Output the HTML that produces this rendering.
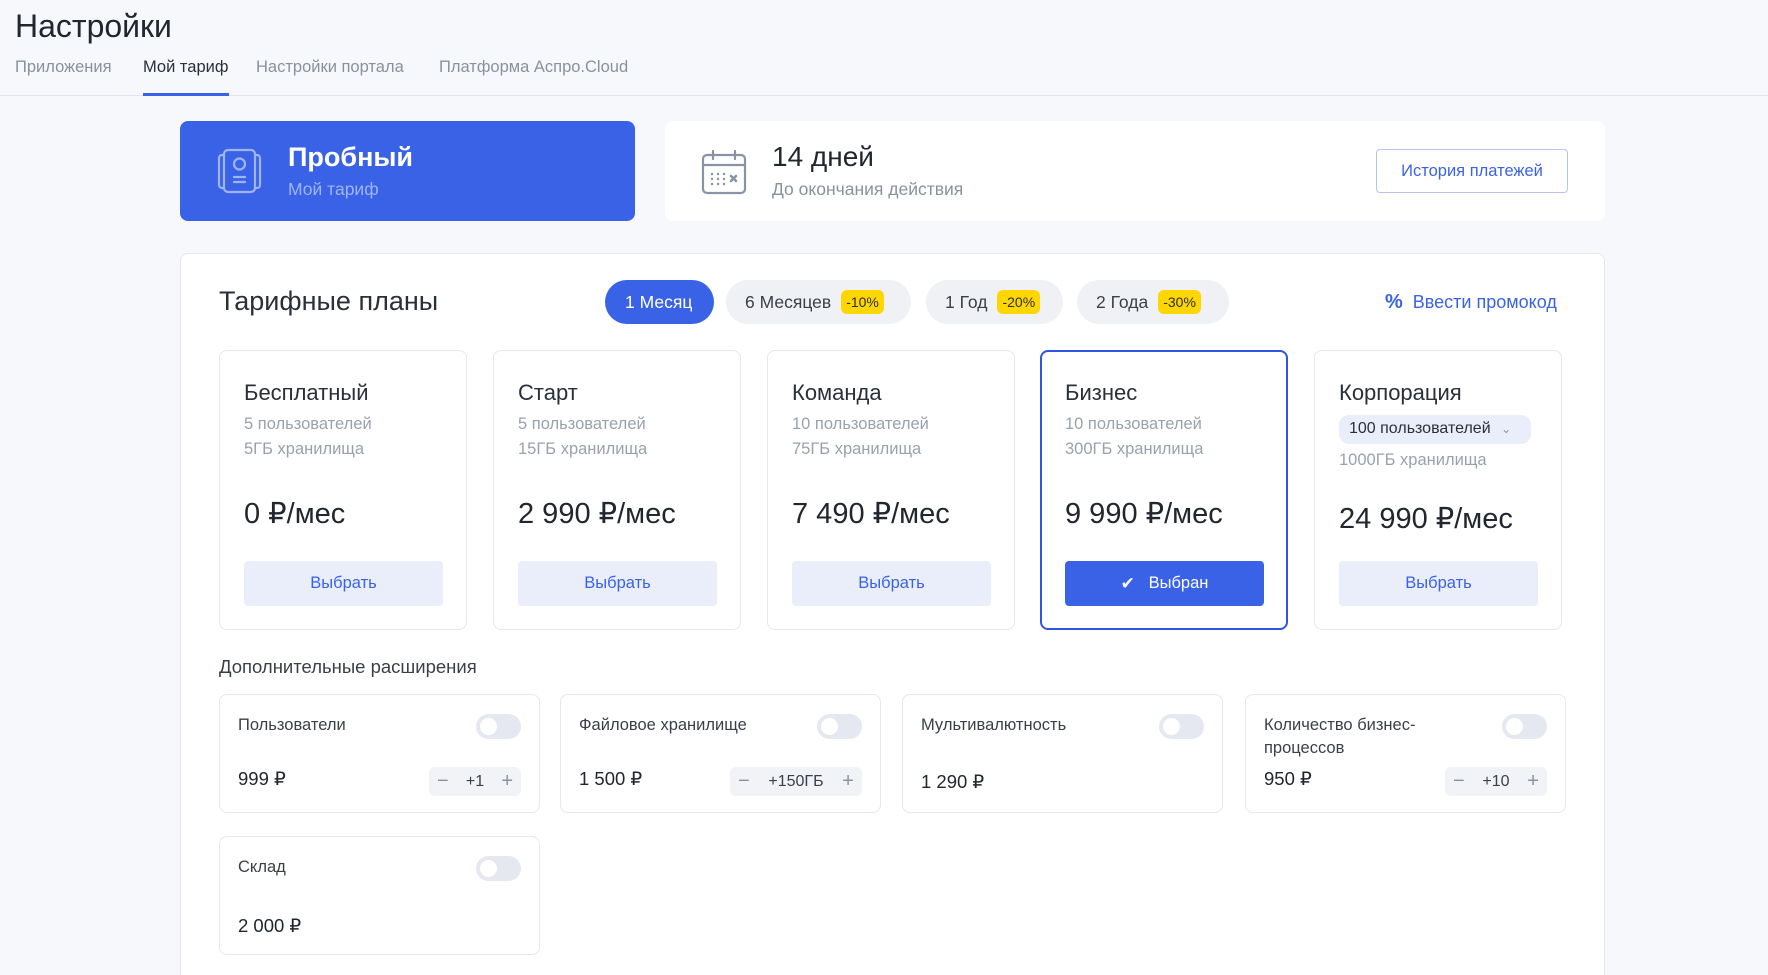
<!DOCTYPE html>
<html><head><meta charset="utf-8"><style>
*{box-sizing:border-box;margin:0;padding:0}
html,body{width:1768px;height:975px;overflow:hidden}
body{background:#f7f8fc;font-family:"Liberation Sans",sans-serif;color:#2b2f38;position:relative}
.a{position:absolute;white-space:nowrap}
.tab{top:58px;font-size:16.5px;color:#8a919c}
.card{position:absolute;background:#fff;border-radius:8px}
.plan{position:absolute;top:350px;width:248px;height:280px;border:1px solid #e6e8f0;border-radius:8px;background:#fff}
.plan .t{position:absolute;left:24px;top:29px;font-size:22px;color:#2b2f38}
.plan .s{position:absolute;left:24px;font-size:16.5px;color:#9aa1ad}
.plan .p{position:absolute;left:24px;top:145px;font-size:29px;color:#22262e}
.plan .b{position:absolute;left:24px;top:210px;width:199px;height:45px;border-radius:4px;background:#eaeefb;color:#3a62e6;font-size:16.5px;display:flex;align-items:center;justify-content:center}
.pill{position:absolute;top:280px;height:44px;border-radius:22px;background:#f0f1f5;font-size:17.5px;color:#3a3f48;display:flex;align-items:center;padding-left:19px}
.bd{background:#ffd600;color:#2b2f38;font-size:14px;border-radius:6px;padding:4px 5px;margin-left:10px}
.ad{position:absolute;width:321px;height:119px;border:1px solid #e6e8f0;border-radius:8px;background:#fff}
.ad .l{position:absolute;left:18px;top:19px;font-size:16.5px;color:#3a3f48;line-height:23px}
.ad .tg{position:absolute;left:256px;top:19px;width:45px;height:25px;border-radius:13px;background:#e5e8f1}
.ad .tg:after{content:"";position:absolute;left:4px;top:4px;width:17px;height:17px;border-radius:50%;background:#fff}
.ad .pr{position:absolute;left:18px;top:73px;font-size:18.5px;color:#22262e}
.ad .st{position:absolute;right:18px;top:72px;height:29px;border-radius:6px;background:#f1f3f7;font-size:16px;color:#3a3f48;display:flex;align-items:center;justify-content:space-between;padding:0 8px}
.ad .st i{font-style:normal;color:#8a93a3;font-size:20px}
</style></head><body>
<div class="a" style="left:15px;top:8px;font-size:32px;color:#22262e">Настройки</div>
<div class="a tab" style="left:15px">Приложения</div>
<div class="a tab" style="left:143px;color:#2b2f38">Мой тариф</div>
<div class="a tab" style="left:256px">Настройки портала</div>
<div class="a tab" style="left:439px">Платформа Аспро.Cloud</div>
<div class="a" style="left:0;top:95px;width:1768px;height:1px;background:#e3e6ee"></div>
<div class="a" style="left:143px;top:93px;width:86px;height:3px;background:#3a62e6"></div>

<div class="card" style="left:180px;top:121px;width:455px;height:100px;background:#3a62e6"></div>
<svg class="a" style="left:216px;top:146px" width="48" height="50" viewBox="0 0 48 50" fill="none" stroke="#9fb4f2" stroke-width="2.2" stroke-linecap="round"><rect x="8" y="4" width="31" height="42" rx="4"/><path d="M8 9H6a3 3 0 0 0-3 3v27a3 3 0 0 0 3 3h2M39 9h2a3 3 0 0 1 3 3v27a3 3 0 0 1-3 3h-2"/><circle cx="23.5" cy="18" r="5.5"/><path d="M18 31h11M18 36h11"/></svg>
<div class="a" style="left:288px;top:142px;font-size:27px;color:#fff;font-weight:bold">Пробный</div>
<div class="a" style="left:288px;top:179px;font-size:17.5px;color:#9fb4f2">Мой тариф</div>

<div class="card" style="left:665px;top:121px;width:940px;height:100px"></div>
<svg class="a" style="left:700px;top:148px" width="48" height="48" viewBox="0 0 48 48" fill="none" stroke="#8893a6" stroke-width="2.2" stroke-linecap="round"><rect x="3" y="7" width="42" height="38" rx="4"/><path d="M3 17h42M13 3v8M35 3v8"/><g stroke-width="2.4"><path d="M12 26h.1M18 26h.1M24 26h.1M12 31h.1M18 31h.1M24 31h.1M12 36h.1M18 36h.1M24 36h.1"/></g><path d="M31 28l5 5M36 28l-5 5" stroke-width="2.6"/></svg>
<div class="a" style="left:772px;top:141px;font-size:28px;color:#22262e">14 дней</div>
<div class="a" style="left:772px;top:179px;font-size:17.5px;color:#8a919c">До окончания действия</div>
<div class="a" style="left:1376px;top:149px;width:192px;height:44px;border:1px solid #b7c4ef;border-radius:4px;background:#fff;color:#3a62e6;font-size:16.5px;display:flex;align-items:center;justify-content:center">История платежей</div>

<div class="card" style="left:180px;top:253px;width:1425px;height:722px;border:1px solid #e6e8f0;border-bottom:none;border-radius:8px 8px 0 0"></div>
<div class="a" style="left:219px;top:286px;font-size:27px;color:#2b2f38">Тарифные планы</div>
<div class="pill" style="left:605px;width:109px;background:#3a62e6;color:#fff;padding-left:20px">1 Месяц</div>
<div class="pill" style="left:726px;width:185px">6 Месяцев<span class="bd">-10%</span></div>
<div class="pill" style="left:926px;width:137px">1 Год<span class="bd">-20%</span></div>
<div class="pill" style="left:1077px;width:152px">2 Года<span class="bd">-30%</span></div>
<div class="a" style="left:1385px;top:291px;font-size:18px;color:#3a62e6"><b style="font-size:20px">%</b>&nbsp; Ввести промокод</div>

<div class="plan" style="left:219px"><div class="t">Бесплатный</div><div class="s" style="top:64px">5 пользователей</div><div class="s" style="top:89px">5ГБ хранилища</div><div class="p">0 ₽/мес</div><div class="b">Выбрать</div></div>
<div class="plan" style="left:493px"><div class="t">Старт</div><div class="s" style="top:64px">5 пользователей</div><div class="s" style="top:89px">15ГБ хранилища</div><div class="p">2 990 ₽/мес</div><div class="b">Выбрать</div></div>
<div class="plan" style="left:767px"><div class="t">Команда</div><div class="s" style="top:64px">10 пользователей</div><div class="s" style="top:89px">75ГБ хранилища</div><div class="p">7 490 ₽/мес</div><div class="b">Выбрать</div></div>
<div class="plan" style="left:1040px;border:2px solid #2f55e4"><div class="t" style="left:23px;top:28px">Бизнес</div><div class="s" style="top:63px;left:23px">10 пользователей</div><div class="s" style="top:88px;left:23px">300ГБ хранилища</div><div class="p" style="top:144px;left:23px">9 990 ₽/мес</div><div class="b" style="top:209px;left:23px;background:#3a62e6;color:#fff"><span style="font-size:17px">✔</span>&nbsp;&nbsp;&nbsp;Выбран</div></div>
<div class="plan" style="left:1314px"><div class="t">Корпорация</div><div class="a" style="left:24px;top:64px;width:192px;height:29px;border-radius:10px;background:#eaeefb;font-size:16px;color:#2b2f38;padding:5px 10px">100 пользователей <span style="color:#8a93a3;font-size:12px;margin-left:6px">⌄</span></div><div class="s" style="top:100px">1000ГБ хранилища</div><div class="p" style="top:150px">24 990 ₽/мес</div><div class="b">Выбрать</div></div>

<div class="a" style="left:219px;top:656px;font-size:18.5px;color:#3a3f48">Дополнительные расширения</div>
<div class="ad" style="left:219px;top:694px"><div class="l">Пользователи</div><div class="tg"></div><div class="pr">999 ₽</div><div class="st" style="width:92px"><i>−</i>+1<i>+</i></div></div>
<div class="ad" style="left:560px;top:694px"><div class="l">Файловое хранилище</div><div class="tg"></div><div class="pr">1 500 ₽</div><div class="st" style="width:132px"><i>−</i>+150ГБ<i>+</i></div></div>
<div class="ad" style="left:902px;top:694px"><div class="l">Мультивалютность</div><div class="tg"></div><div class="pr" style="top:76px">1 290 ₽</div></div>
<div class="ad" style="left:1245px;top:694px"><div class="l">Количество бизнес-<br>процессов</div><div class="tg"></div><div class="pr">950 ₽</div><div class="st" style="width:102px"><i>−</i>+10<i>+</i></div></div>
<div class="ad" style="left:219px;top:836px"><div class="l">Склад</div><div class="tg"></div><div class="pr" style="top:78px">2 000 ₽</div></div>
</body></html>
